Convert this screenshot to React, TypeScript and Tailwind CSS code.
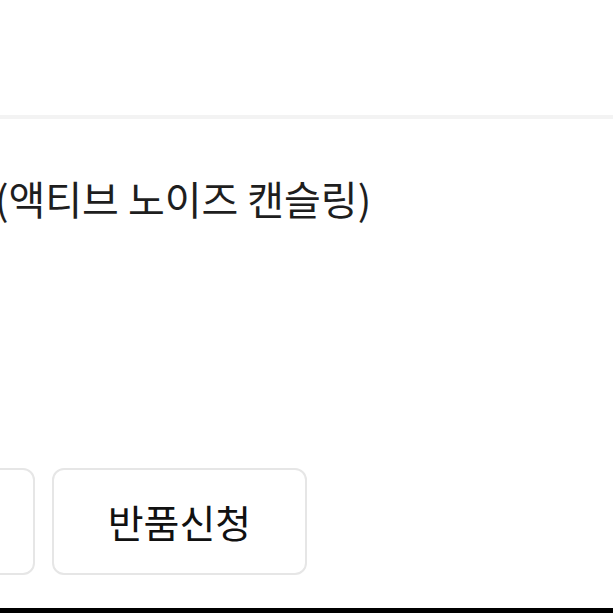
import React from 'react';

const font = { fontFamily: '"Noto Sans CJK KR", "Noto Sans", sans-serif' };

export default function App() {
  return (
    <div className="w-[613px] h-[613px] overflow-hidden bg-white flex flex-col" style={font}>
      <div className="h-[115px] shrink-0" />
      <div className="h-[4px] shrink-0 bg-[#f3f3f3]" />
      <div className="flex-1 flex flex-col">
        <div className="mt-[52px] -ml-[5px] text-[40px] leading-[54px] text-[#1e1e1e] whitespace-nowrap">
          (액티브 노이즈 캔슬링)
        </div>
        <div className="mt-auto mb-[33px] flex gap-[17px] -ml-[220px]">
          <button className="w-[255px] h-[107px] rounded-[12px] border-2 border-[#e6e6e6] bg-white" />
          <button className="w-[255px] h-[107px] rounded-[12px] border-2 border-[#e6e6e6] bg-white text-[39px] text-[#111] font-normal">
            반품신청
          </button>
        </div>
      </div>
      <div className="h-[5px] shrink-0 bg-black" />
    </div>
  );
}
